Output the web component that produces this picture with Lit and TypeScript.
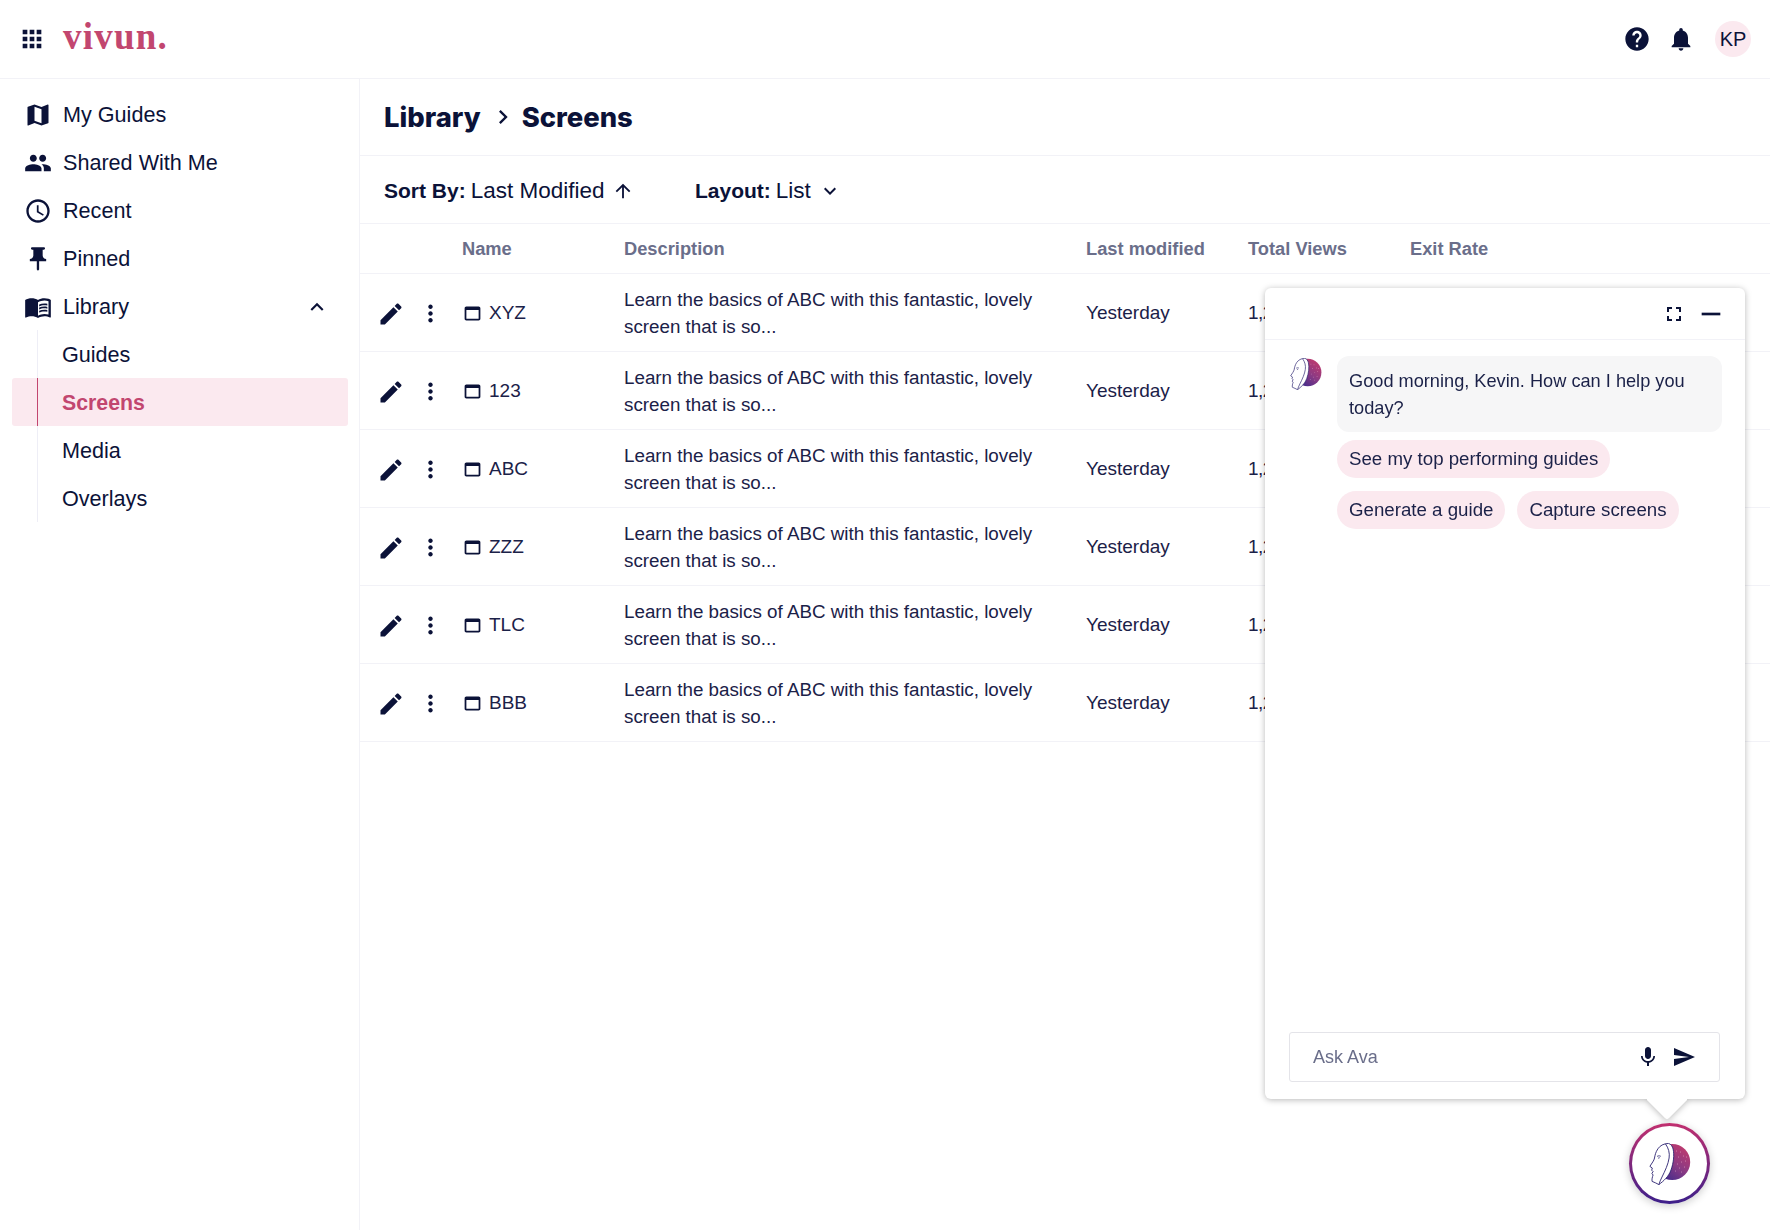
import { LitElement, html, css, svg } from 'lit';
import { customElement } from 'lit/decorators.js';

const ICONS: Record<string, string> = {
  apps: 'M4 8h4V4H4v4zm6 12h4v-4h-4v4zm-6 0h4v-4H4v4zm0-6h4v-4H4v4zm6 0h4v-4h-4v4zm6-10v4h4V4h-4zm-6 4h4V4h-4v4zm6 6h4v-4h-4v4zm0 6h4v-4h-4v4z',
  map: 'M20.5 3l-.16.03L15 5.1 9 3 3.36 4.9c-.21.07-.36.25-.36.48V20.5c0 .28.22.5.5.5l.16-.03L9 18.9l6 2.1 5.64-1.9c.21-.07.36-.25.36-.48V3.5c0-.28-.22-.5-.5-.5zM15 19l-6-2.11V5l6 2.11V19z',
  people: 'M16 11c1.66 0 2.99-1.34 2.99-3S17.66 5 16 5c-1.66 0-3 1.34-3 3s1.34 3 3 3zm-8 0c1.66 0 2.99-1.34 2.99-3S9.66 5 8 5C6.34 5 5 6.34 5 8s1.34 3 3 3zm0 2c-2.33 0-7 1.17-7 3.5V19h14v-2.5c0-2.33-4.67-3.5-7-3.5zm8 0c-.29 0-.62.02-.97.05 1.16.84 1.97 1.97 1.97 3.45V19h6v-2.5c0-2.33-4.67-3.5-7-3.5z',
  schedule: 'M11.99 2C6.47 2 2 6.48 2 12s4.47 10 9.99 10C17.52 22 22 17.52 22 12S17.52 2 11.99 2zM12 20c-4.42 0-8-3.58-8-8s3.58-8 8-8 8 3.58 8 8-3.58 8-8 8zm.5-13H11v6l5.25 3.15.75-1.23-4.5-2.67z',
  pin: 'M16 9V4h1c.55 0 1-.45 1-1s-.45-1-1-1H7c-.55 0-1 .45-1 1s.45 1 1 1h1v5c0 1.66-1.34 3-3 3v2h5.97v7l1 1 1-1v-7H19v-2c-1.66 0-3-1.34-3-3z',
  book: 'M21 5c-1.11-.35-2.33-.5-3.5-.5-1.95 0-4.05.4-5.5 1.5-1.45-1.1-3.55-1.5-5.5-1.5S2.45 4.9 1 6v14.65c0 .25.25.5.5.5.1 0 .15-.05.25-.05C3.1 20.45 5.05 20 6.5 20c1.95 0 4.05.4 5.5 1.5 1.35-.85 3.8-1.5 5.5-1.5 1.65 0 3.35.3 4.75 1.05.1.05.15.05.25.05.25 0 .5-.25.5-.5V6c-.6-.45-1.25-.75-2-1zm0 13.5c-1.1-.35-2.3-.5-3.5-.5-1.7 0-4.15.65-5.5 1.5V8c1.35-.85 3.8-1.5 5.5-1.5 1.2 0 2.4.15 3.5.5v11.5zM17.5 10.5c.88 0 1.73.09 2.5.26V9.24c-.79-.15-1.64-.24-2.5-.24-1.7 0-3.24.29-4.5.83v1.66c1.13-.64 2.7-.99 4.5-.99zM13 12.49v1.66c1.13-.64 2.7-.99 4.5-.99.88 0 1.73.09 2.5.26V11.9c-.79-.15-1.64-.24-2.5-.24-1.7 0-3.24.3-4.5.83zM17.5 14.33c-1.7 0-3.24.29-4.5.83v1.66c1.13-.64 2.7-.99 4.5-.99.88 0 1.73.09 2.5.26v-1.52c-.79-.16-1.64-.24-2.5-.24z',
  up: 'M12 8l-6 6 1.41 1.41L12 10.83l4.59 4.58L18 14z',
  down: 'M7.41 8.59L12 13.17l4.59-4.58L18 10l-6 6-6-6z',
  right: 'M10 6L8.59 7.41 13.17 12l-4.58 4.59L10 18l6-6z',
  arrowUp: 'M4 12l1.41 1.41L11 7.83V20h2V7.83l5.58 5.59L20 12l-8-8-8 8z',
  help: 'M12 2C6.48 2 2 6.48 2 12s4.48 10 10 10 10-4.48 10-10S17.52 2 12 2zm1 17h-2v-2h2v2zm2.07-7.75l-.9.92C13.45 12.9 13 13.5 13 15h-2v-.5c0-1.1.45-2.1 1.17-2.83l1.24-1.26c.37-.36.59-.86.59-1.41 0-1.1-.9-2-2-2s-2 .9-2 2H8c0-2.21 1.79-4 4-4s4 1.79 4 4c0 .88-.36 1.68-.93 2.25z',
  bell: 'M12 22c1.1 0 2-.9 2-2h-4c0 1.1.89 2 2 2zm6-6v-5c0-3.07-1.64-5.64-4.5-6.32V4c0-.83-.67-1.5-1.5-1.5s-1.5.67-1.5 1.5v.68C7.63 5.36 6 7.92 6 11v5l-2 2v1h16v-1l-2-2z',
  edit: 'M3 17.25V21h3.75L17.81 9.94l-3.75-3.75L3 17.25zM20.71 7.04c.39-.39.39-1.02 0-1.41l-2.34-2.34c-.39-.39-1.02-.39-1.41 0l-1.83 1.83 3.75 3.75 1.83-1.83z',
  more: 'M12 8c1.1 0 2-.9 2-2s-.9-2-2-2-2 .9-2 2 .9 2 2 2zm0 2c-1.1 0-2 .9-2 2s.9 2 2 2 2-.9 2-2-.9-2-2-2zm0 6c-1.1 0-2 .9-2 2s.9 2 2 2 2-.9 2-2-.9-2-2-2z',
  web: 'M19 4H5c-1.11 0-2 .9-2 2v12c0 1.1.89 2 2 2h14c1.1 0 2-.9 2-2V6c0-1.1-.89-2-2-2zm0 14H5V8h14v10z',
  fullscreen: 'M7 14H5v5h5v-2H7v-3zm-2-4h2V7h3V5H5v5zm12 7h-3v2h5v-5h-2v3zM14 5v2h3v3h2V5h-5z',
  remove: 'M19 13H5v-2h14v2z',
  mic: 'M12 14c1.66 0 2.99-1.34 2.99-3L15 5c0-1.66-1.34-3-3-3S9 3.34 9 5v6c0 1.66 1.34 3 3 3zm5.3-3c0 3-2.54 5.1-5.3 5.1S6.7 14 6.7 11H5c0 3.41 2.72 6.23 6 6.72V21h2v-3.28c3.28-.48 6-3.3 6-6.72h-1.7z',
  send: 'M2.01 21L23 12 2.01 3 2 10l15 2-15 2z',
};

const icon = (name: string, size: number) => html`
  <svg class="icon" width=${size} height=${size} viewBox="0 0 24 24" fill="currentColor">
    <path d=${ICONS[name]}></path>
  </svg>`;

// speckles on the moon behind the face
const SPECKS = [[31, 9], [34, 13], [29, 14], [36, 18], [32, 19], [28, 21], [35, 24], [30, 25], [26, 28], [32, 29], [37, 14], [27, 8]];

const avaLogo = (size: number, id: string) => html`
  <svg width=${size} height=${size} viewBox="0 0 41 42">
    <defs>
      <linearGradient id=${id} x1="0.85" y1="0.1" x2="0.2" y2="0.95">
        <stop offset="0" stop-color="#bd3a6e"></stop>
        <stop offset="0.5" stop-color="#8a3a84"></stop>
        <stop offset="1" stop-color="#3f2a8c"></stop>
      </linearGradient>
    </defs>
    <circle cx="22.7" cy="19" r="18" fill="url(#${id})"></circle>
    ${SPECKS.map(([x, y]) => svg`<circle cx=${x} cy=${y} r="0.45" fill="#f3c6d8"></circle>`)}
    <path d="M19 .4C14 .6 10.600 2.600 8.400 5.800 6 9.400 5.600 12 5 15 4.600 17.600 2.400 20 .4 23.400L2.800 25l-.6 2.200 1.400 1.400-1.200 1.800L3.600 32c-.8 2-1.400 4.600-1 6.400 2.400.6 4.400 2.200 6.800 3.200 4.600-3.600 9.600-7.600 12.100-14.600 2.500-7 3.500-15 2.100-21C23 3.500 21.600 1.200 19 .4z"
      fill="#fff" stroke="#2b2370" stroke-width="0.9" stroke-linejoin="round"></path>
    <path d="M16 1c3 4 4.400 9 3.600 14-.8 6-4.100 13-7.100 19-1.300 2.800-2.500 5-3.100 7.600" fill="none" stroke="#2b2370" stroke-width="0.9"></path>
    <path d="M7.500 13.500c1-.8 2.600-.9 3.800-.2M8.600 15.200l1.600-.5" fill="none" stroke="#2b2370" stroke-width="0.8"></path>
  </svg>`;

const NAV = [
  { icon: 'map', label: 'My Guides' },
  { icon: 'people', label: 'Shared With Me' },
  { icon: 'schedule', label: 'Recent' },
  { icon: 'pin', label: 'Pinned' },
];
const SUB_NAV = ['Guides', 'Screens', 'Media', 'Overlays'];
const ROWS = ['XYZ', '123', 'ABC', 'ZZZ', 'TLC', 'BBB'];

@customElement('app-root')
export class AppRoot extends LitElement {
  static styles = css`
    :host {
      --navy: #0b1238;
      --text: #1b2148;
      --muted: #6a6e8a;
      --line: #f2f2f7;
      --pink: #c2466f;
      --pink-bg: #fbe9ef;
      display: block;
      position: relative;
      height: 1230px;
      overflow: hidden;
      background: #fff;
      color: var(--text);
      font-family: 'Liberation Sans', Arial, sans-serif;
    }
    .icon { display: block; flex: none; }

    .topbar {
      display: flex;
      align-items: center;
      height: 78px;
      padding-left: 18px;
      padding-right: 19px;
      border-bottom: 1px solid var(--line);
      color: var(--navy);
    }
    .logo {
      margin-left: 17px;
      margin-top: -5px;
      font-family: 'Liberation Serif', serif;
      font-weight: 700;
      font-size: 37px;
      letter-spacing: 1.2px;
      line-height: 1;
      color: var(--pink);
    }
    .top-actions { display: flex; align-items: center; margin-left: auto; }
    .top-actions .icon + .icon { margin-left: 16px; }
    .avatar {
      display: flex;
      align-items: center;
      justify-content: center;
      width: 36px;
      height: 36px;
      margin-left: 20px;
      border-radius: 50%;
      background: var(--pink-bg);
      font-size: 20px;
    }

    .body { display: flex; height: 1151px; }
    .sidebar {
      flex: none;
      box-sizing: border-box;
      width: 360px;
      padding: 11px 11px 0 12px;
      border-right: 1px solid var(--line);
    }
    .nav-item {
      display: flex;
      align-items: center;
      gap: 11px;
      box-sizing: border-box;
      height: 48px;
      padding: 2px 18px 0 12px;
      font-size: 21.6px;
      color: var(--navy);
    }
    .nav-item .chev { margin-left: auto; }
    .sub-item {
      height: 48px;
      padding-left: 25px;
      font-size: 21.6px;
      border-radius: 3px;
      color: var(--navy);
    }
    .sub-item div {
      display: flex;
      align-items: center;
      box-sizing: border-box;
      height: 100%;
      padding: 2px 0 0 24px;
      border-left: 1px solid #eeeef6;
    }
    .sub-item.active { background: var(--pink-bg); color: var(--pink); font-weight: 700; font-size: 21.3px; }
    .sub-item.active div { border-left-color: var(--pink); }

    .main { flex: 1; min-width: 0; }
    .crumbs {
      display: flex;
      align-items: center;
      box-sizing: border-box;
      height: 77px;
      padding-left: 24px;
      border-bottom: 1px solid var(--line);
      font-family: 'Inter', sans-serif;
      font-weight: 800;
      font-size: 27.4px;
      color: var(--navy);
    }
    .crumbs .icon { margin: 0 5px 0 8px; }
    .toolbar {
      display: flex;
      align-items: center;
      box-sizing: border-box;
      height: 68px;
      padding: 2px 0 0 24px;
      border-bottom: 1px solid var(--line);
      font-size: 22.5px;
      color: var(--navy);
    }
    .toolbar b { margin-right: 5px; font-size: 21px; }
    .toolbar .sort { display: flex; align-items: center; gap: 7px; width: 311px; }
    .toolbar .layout { display: flex; align-items: center; }
    .toolbar .layout .icon { margin-left: 7px; }

    .row {
      display: grid;
      grid-template-columns: 102px 162px 462px 162px 162px 1fr;
      align-items: center;
      border-bottom: 1px solid var(--line);
      box-sizing: border-box;
    }
    .row.head { height: 50px; padding-top: 1px; font-size: 18.3px; font-weight: 700; color: var(--muted); }
    .row.item { height: 78px; font-size: 19px; }
    .actions { display: flex; align-items: center; padding: 2px 0 0 17px; color: var(--navy); }
    .actions .more { margin-left: 12px; }
    .name { display: flex; align-items: center; gap: 6px; }
    .name .icon { color: var(--navy); margin-top: 2px; }
    .desc { line-height: 27px; font-size: 18.8px; padding-right: 30px; }
    .views { letter-spacing: -0.5px; }

    .chat {
      position: absolute;
      left: 1265px;
      top: 288px;
      width: 480px;
      height: 811px;
      display: flex;
      flex-direction: column;
      box-sizing: border-box;
      background: #fff;
      border-radius: 6px;
      filter: drop-shadow(0 1px 3px rgba(0, 0, 0, 0.28));
    }
    .chat::after {
      content: '';
      position: absolute;
      left: 387px;
      bottom: -15px;
      width: 30px;
      height: 30px;
      background: #fff;
      border-radius: 3px;
      transform: rotate(45deg);
      z-index: -1;
    }
    .chat-head {
      display: flex;
      align-items: center;
      justify-content: flex-end;
      gap: 9px;
      height: 51px;
      padding-right: 18px;
      border-bottom: 1px solid var(--line);
      color: var(--navy);
    }
    .chat-body { display: flex; gap: 15px; padding: 16px 23px 0 25px; }
    .chat-body > svg { flex: none; margin-top: 2px; }
    .messages { flex: 1; min-width: 0; }
    .bubble {
      padding: 12px 12px 10px;
      background: #f6f6f7;
      border-radius: 12px;
      font-size: 18.2px;
      line-height: 27px;
    }
    .chips { display: flex; flex-wrap: wrap; gap: 13px 12px; margin-top: 8px; }
    .chip {
      display: flex;
      align-items: center;
      height: 38px;
      padding: 0 12px;
      background: var(--pink-bg);
      border-radius: 19px;
      font-size: 18.7px;
    }
    .ask {
      display: flex;
      align-items: center;
      height: 50px;
      margin: auto 25px 17px 24px;
      padding: 0 23px 0 23px;
      border: 1px solid #e4e4e9;
      border-radius: 3px;
      box-sizing: border-box;
      font-size: 18px;
      color: var(--muted);
    }
    .ask .mic { margin-left: auto; color: var(--navy); }
    .ask .send { margin-left: 12px; color: var(--navy); }

    .launcher {
      position: absolute;
      left: 1629px;
      top: 1123px;
      width: 81px;
      height: 81px;
      padding: 3px;
      box-sizing: border-box;
      border-radius: 50%;
      background: linear-gradient(180deg, #c2306f, #3c1f8a);
      box-shadow: 0 2px 8px rgba(0, 0, 0, 0.2);
    }
    .launcher div {
      display: flex;
      align-items: center;
      justify-content: center;
      height: 100%;
      border-radius: 50%;
      background: #fff;
    }
  `;

  renderRow(name: string) {
    return html`
      <div class="row item">
        <div class="actions">
          ${icon('edit', 28)}
          <span class="more">${icon('more', 27)}</span>
        </div>
        <div class="name">${icon('web', 21)}<span>${name}</span></div>
        <div class="desc">Learn the basics of ABC with this fantastic, lovely screen that is so...</div>
        <div>Yesterday</div>
        <div class="views">1,234</div>
        <div></div>
      </div>`;
  }

  render() {
    return html`
      <div class="topbar">
        ${icon('apps', 28)}
        <div class="logo">vivun.</div>
        <div class="top-actions">
          ${icon('help', 28)}
          ${icon('bell', 28)}
          <div class="avatar">KP</div>
        </div>
      </div>
      <div class="body">
        <nav class="sidebar">
          ${NAV.map(n => html`<div class="nav-item">${icon(n.icon, 28)}<span>${n.label}</span></div>`)}
          <div class="nav-item">
            ${icon('book', 28)}<span>Library</span>
            <span class="chev">${icon('up', 26)}</span>
          </div>
          ${SUB_NAV.map(s => html`<div class="sub-item ${s === 'Screens' ? 'active' : ''}"><div>${s}</div></div>`)}
        </nav>
        <main class="main">
          <div class="crumbs"><span>Library</span>${icon('right', 28)}<span>Screens</span></div>
          <div class="toolbar">
            <div class="sort"><span><b>Sort By:</b>Last Modified</span>${icon('arrowUp', 22)}</div>
            <div class="layout"><span><b>Layout:</b>List</span>${icon('down', 24)}</div>
          </div>
          <div class="row head">
            <div></div>
            <div>Name</div>
            <div>Description</div>
            <div>Last modified</div>
            <div>Total Views</div>
            <div>Exit Rate</div>
          </div>
          ${ROWS.map(r => this.renderRow(r))}
        </main>
      </div>
      <section class="chat">
        <div class="chat-head">${icon('fullscreen', 24)}${icon('remove', 32)}</div>
        <div class="chat-body">
          ${avaLogo(32, 'ava-small')}
          <div class="messages">
            <div class="bubble">Good morning, Kevin. How can I help you today?</div>
            <div class="chips">
              <div class="chip">See my top performing guides</div>
              <div class="chip">Generate a guide</div>
              <div class="chip">Capture screens</div>
            </div>
          </div>
        </div>
        <div class="ask">
          <span>Ask Ava</span>
          <span class="mic">${icon('mic', 24)}</span>
          <span class="send">${icon('send', 24)}</span>
        </div>
      </section>
      <div class="launcher"><div>${avaLogo(42, 'ava-large')}</div></div>
    `;
  }
}
